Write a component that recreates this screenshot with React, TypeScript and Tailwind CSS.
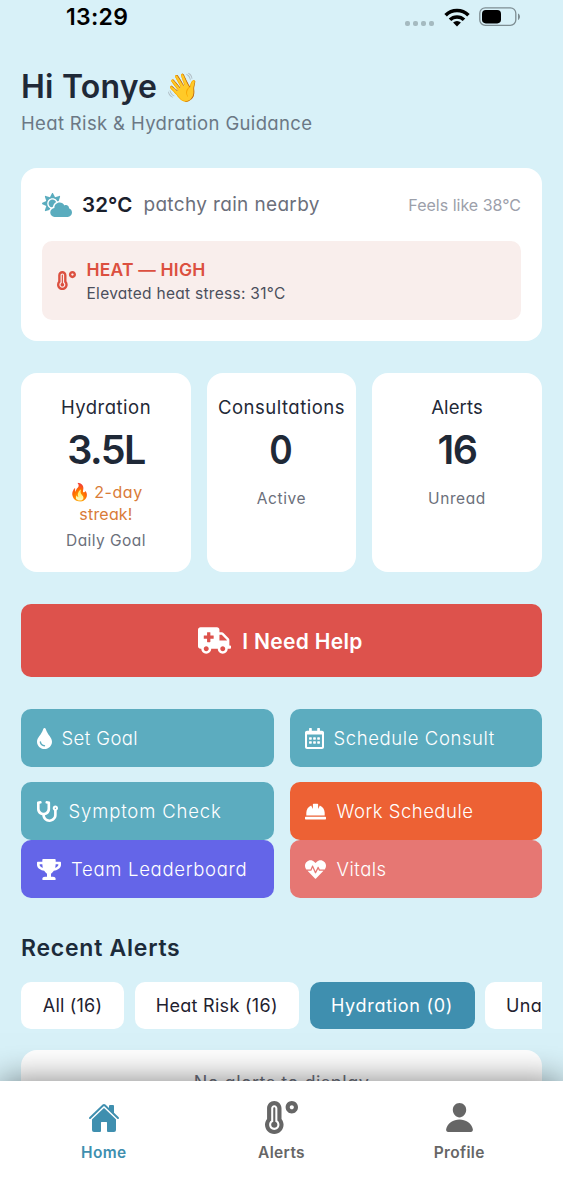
import type { ReactNode } from "react";
import type { IconType } from "react-icons";
import {
  FaCloudSun,
  FaTemperatureHigh,
  FaAmbulance,
  FaTint,
  FaStethoscope,
  FaRegCalendarAlt,
  FaHardHat,
  FaTrophy,
  FaHeartbeat,
} from "react-icons/fa";
import { IoHome, IoPerson } from "react-icons/io5";

function StatusBar() {
  return (
    <div className="flex h-[34px] items-center justify-between pr-[42px] pl-[66px] text-black">
      <span className="text-[23px] leading-[34px] font-semibold tracking-[0.3px]">13:29</span>
      <div className="flex items-center">
        <div className="mt-3 mr-[10px] flex gap-[3px]">
          {[0, 1, 2, 3].map((i) => (
            <span key={i} className="size-[5px] rounded-[2px] bg-[#a5bac0]" />
          ))}
        </div>
        <svg width="26" height="19" viewBox="0 0 26 19" className="mr-[9px]" fill="none" stroke="#000" strokeWidth="3.6">
          <path d="M1.6 7.2a16.2 16.2 0 0 1 22.8 0" />
          <path d="M6 11.8a10 10 0 0 1 14 0" />
          <path d="M13 18.6l-3.9-4a5.6 5.6 0 0 1 7.8 0z" fill="#000" stroke="none" />
        </svg>
        <svg width="42" height="20" viewBox="0 0 42 20">
          <rect x="0.8" y="0.8" width="36" height="17.6" rx="5.5" fill="none" stroke="#7d8d92" strokeWidth="1.3" />
          <rect x="3" y="3" width="19" height="13.4" rx="3.8" fill="#000" />
          <path d="M39 6.5c2.6 1 2.6 5.4 0 6.4z" fill="#7d8d92" />
        </svg>
      </div>
    </div>
  );
}

function StatCard({ title, value, valueClass, children, titleClass }: { title: string; value: string; valueClass: string; titleClass: string; children: ReactNode }) {
  return (
    <div className="flex flex-col items-center rounded-2xl bg-white pt-[22px] whitespace-nowrap">
      <div className={`text-[18.5px] leading-6 text-[#1f2937] ${titleClass}`}>{title}</div>
      <div className={`mt-[7px] text-[39.5px] leading-[48px] font-semibold text-[#1f2937] ${valueClass}`}>{value}</div>
      {children}
    </div>
  );
}

function Action({ icon: Icon, label, bg, iconClass, labelClass }: { icon: IconType; label: string; bg: string; iconClass: string; labelClass: string }) {
  return (
    <button className={`flex h-[58px] items-center rounded-[10px] pl-[15.5px] whitespace-nowrap text-white ${bg}`}>
      <Icon className={`shrink-0 ${iconClass}`} preserveAspectRatio="none" />
      <span className={`pb-px text-[18.5px] leading-6 font-[350] ${labelClass}`}>{label}</span>
    </button>
  );
}

function Tab({ label, className }: { label: string; className: string }) {
  return (
    <button className={`h-[47px] shrink-0 rounded-[10px] pt-px text-[18px] leading-6 whitespace-nowrap ${className}`}>{label}</button>
  );
}

function NavItem({ icon: Icon, label, iconClass, className }: { icon: IconType; label: string; iconClass: string; className: string }) {
  return (
    <div className={`flex flex-1 flex-col items-center pt-[20px] ${className}`}>
      <div className="flex h-[33px] items-center">
        <Icon className={iconClass} />
      </div>
      <span className="mt-[9px] text-[15.5px] leading-5 font-semibold tracking-[0.35px]">{label}</span>
    </div>
  );
}

export default function App() {
  return (
    <div className="relative h-[1200px] w-[563px] overflow-hidden bg-[#d8f1f8] font-['Inter',sans-serif] [font-feature-settings:'cv11']">
      <StatusBar />

      <main className="px-[21px]">
        <header className="pt-[33px] whitespace-nowrap">
          <h1 className="flex h-10 items-center text-[32px] font-semibold tracking-[0.2px] text-[#1f2937]">
            Hi Tonye<span className="ml-[8px] text-[28px] tracking-normal">👋</span>
          </h1>
          <p className="mt-[4px] text-[18.5px] leading-6 tracking-[0.35px] text-[#6b7885]">Heat Risk &amp; Hydration Guidance</p>
        </header>

        <section className="mt-[33px] h-[173px] rounded-2xl bg-white px-[21px] pt-[21px] whitespace-nowrap">
          <div className="flex h-8 items-center">
            <FaCloudSun className="h-[24px] w-[30px] text-[#5aacbe]" />
            <span className="ml-[10px] text-[20.5px] font-semibold tracking-[0.1px] text-[#1a202c]">32°C</span>
            <span className="ml-[11px] text-[19px] tracking-[0.35px] text-[#6b6f7b]">patchy rain nearby</span>
            <span className="ml-auto pb-px text-[16px] text-[#9ca0aa]">Feels like 38°C</span>
          </div>
          <div className="mt-5 flex h-[79px] items-center rounded-[10px] bg-[#f9eeec] pl-[15px]">
            <FaTemperatureHigh className="size-[19px] text-[#dc5040]" />
            <div className="ml-[10.5px] pt-[2px]">
              <div className="text-[17.5px] leading-6 font-semibold tracking-[0.2px] text-[#dc5040]">HEAT — HIGH</div>
              <div className="text-[15.5px] leading-[23px] tracking-[0.28px] text-[#4b4f5c]">Elevated heat stress: 31°C</div>
            </div>
          </div>
        </section>

        <section className="mt-8 grid h-[199px] grid-cols-[170px_149px_170px] gap-4">
          <StatCard title="Hydration" value="3.5L" titleClass="tracking-[0.5px]" valueClass="tracking-[-1.5px]">
            <div className="mt-[8px] flex flex-col items-center text-[16px] leading-[21.5px] text-[#d97b38]">
              <div className="flex items-center">
                <span className="w-[25px] text-[17px]">🔥</span>
                <span className="tracking-[0.6px]">2-day</span>
              </div>
              <div className="tracking-[0.2px]">streak!</div>
            </div>
            <div className="mt-[6px] text-[15.5px] leading-5 tracking-[0.45px] text-[#6b6f7b]">Daily Goal</div>
          </StatCard>
          <StatCard title="Consultations" value="0" titleClass="tracking-[0.5px]" valueClass="origin-center scale-x-90">
            <div className="mt-[15px] text-[15.5px] leading-5 tracking-[0.6px] text-[#6b6f7b]">Active</div>
          </StatCard>
          <StatCard title="Alerts" value="16" titleClass="tracking-[0.1px]" valueClass="tracking-[-1.6px]">
            <div className="mt-[15px] text-[15.5px] leading-5 tracking-[0.6px] text-[#6b6f7b]">Unread</div>
          </StatCard>
        </section>

        <button className="mt-8 flex h-[73px] w-full items-center justify-center rounded-[10px] bg-[#dd524c] pr-[2px] text-white">
          <FaAmbulance className="h-[27px] w-[33px]" />
          <span className="ml-[11px] pt-[2px] text-[21px] font-semibold tracking-[0.3px]">I Need Help</span>
        </button>

        <section className="mt-8 grid grid-cols-2 gap-x-4">
          <Action icon={FaTint} label="Set Goal" bg="bg-[#5cacbf]" iconClass="h-[21px] w-[15px]" labelClass="ml-[10px] tracking-[0.4px]" />
          <Action icon={FaRegCalendarAlt} label="Schedule Consult" bg="bg-[#5cacbf]" iconClass="h-[21px] w-[19px]" labelClass="ml-[9.5px] tracking-[0.6px]" />
          <div className="col-span-2 h-[15px]" />
          <Action icon={FaStethoscope} label="Symptom Check" bg="bg-[#5cacbf]" iconClass="size-[21px]" labelClass="ml-[11px] tracking-[0.85px]" />
          <Action icon={FaHardHat} label="Work Schedule" bg="bg-[#ed6134]" iconClass="size-[21px]" labelClass="ml-[10.5px] tracking-[0.5px]" />
          <Action icon={FaTrophy} label="Team Leaderboard" bg="bg-[#6465e8]" iconClass="h-[21px] w-[24px]" labelClass="ml-[10.5px] tracking-[0.7px]" />
          <Action icon={FaHeartbeat} label="Vitals" bg="bg-[#e67773]" iconClass="size-[21px]" labelClass="ml-[10.5px] tracking-[0.5px]" />
        </section>

        <h2 className="mt-[35px] text-[23px] leading-[30px] font-semibold tracking-[0.75px] text-[#1c2b3a]">Recent Alerts</h2>

        <div className="mt-[19px] flex gap-[10.5px] overflow-hidden">
          <Tab label="All (16)" className="w-[103px] bg-white tracking-[0.2px] text-[#1f2230]" />
          <Tab label="Heat Risk (16)" className="w-[164.5px] bg-white tracking-[0.3px] text-[#1f2230]" />
          <Tab label="Hydration (0)" className="w-[165px] bg-[#3f8faf] tracking-[0.7px] text-white" />
          <Tab label="Unacknowledged (16)" className="bg-white px-[21px] tracking-[0.4px] text-[#1f2230]" />
        </div>

        <div className="mt-[21px] h-24 rounded-2xl bg-white pt-[21px] text-center text-[18px] leading-6 tracking-[0.5px] text-[#6b6f7b]">
          No alerts to display
        </div>
      </main>

      <nav className="absolute inset-x-0 bottom-0 flex h-[119px] bg-white px-[15px] shadow-[0_0_32px_rgba(0,0,0,0.5)]">
        <NavItem icon={IoHome} label="Home" iconClass="size-[32px]" className="text-[#3f8faf]" />
        <NavItem icon={FaTemperatureHigh} label="Alerts" iconClass="size-[33px]" className="text-[#666666]" />
        <NavItem icon={IoPerson} label="Profile" iconClass="size-[33px]" className="text-[#666666]" />
      </nav>
    </div>
  );
}
